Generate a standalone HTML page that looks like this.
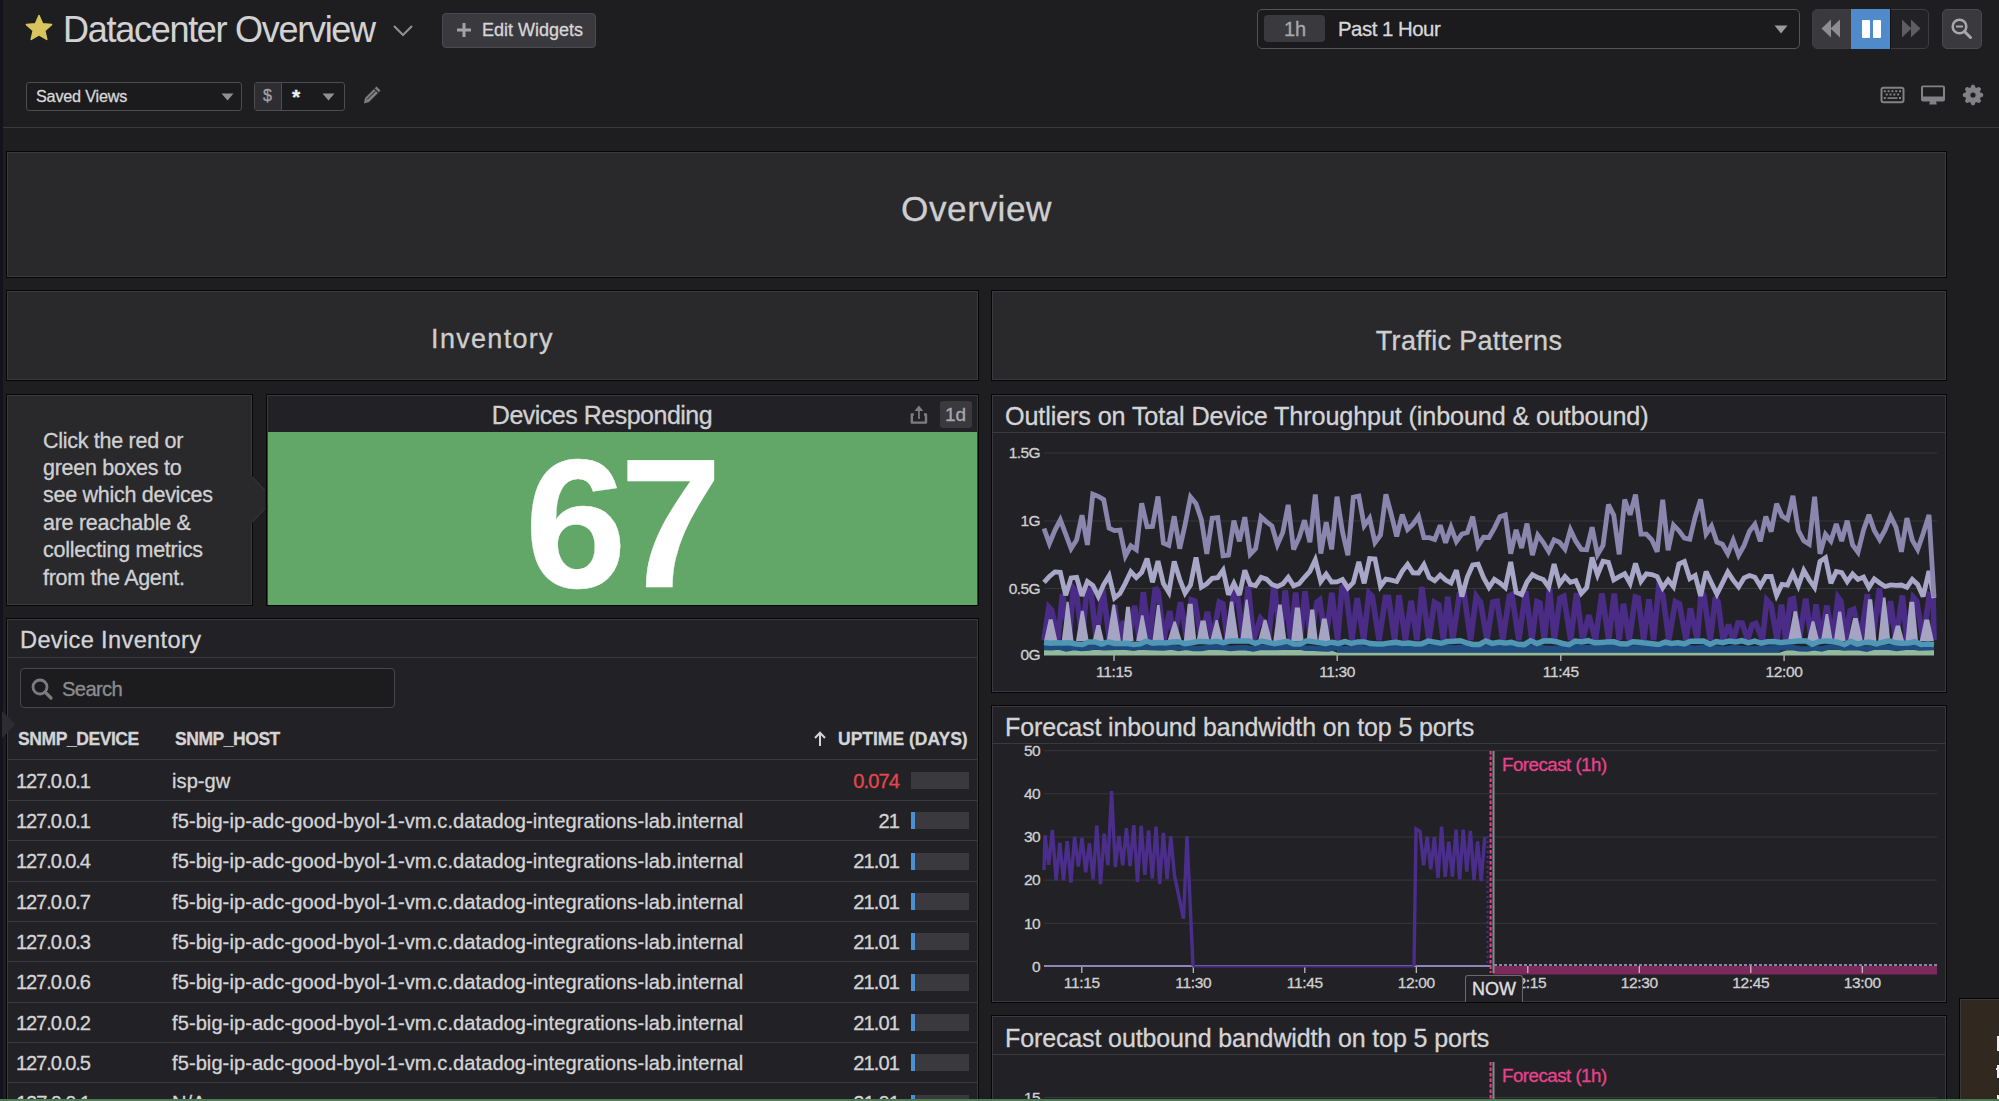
<!DOCTYPE html><html><head><meta charset="utf-8"><style>
*{box-sizing:border-box;margin:0;padding:0}
html,body{width:1999px;height:1101px;overflow:hidden;background:#1e1e20;font-family:"Liberation Sans",sans-serif;color:#d0d0d2}
.a{position:absolute;white-space:nowrap}
.pn{position:absolute;border:1px solid #060608;box-shadow:inset 0 0 0 1px #3a393f;background:#29292c}
.pd{background:#222226}
.t{position:absolute;white-space:nowrap;line-height:1;-webkit-text-stroke:0.3px currentColor}
</style></head><body><div class="a" style="left:0;top:0;width:3px;height:1101px;background:#14131b"></div><div class="a" style="left:3px;top:127px;width:1996px;height:1px;background:#3a393d"></div><svg class="a" style="left:24px;top:14px" width="30" height="28" viewBox="0 0 30 28"><path d="M15 1.5 L18.6 9.8 L27.6 10.6 L20.8 16.6 L22.8 25.4 L15 20.8 L7.2 25.4 L9.2 16.6 L2.4 10.6 L11.4 9.8 Z" fill="#d9c45e" stroke="#d9c45e" stroke-width="1.5" stroke-linejoin="round"/></svg><div class="t" style="left:63px;top:11.5px;font-size:36px;letter-spacing:-1.28px;-webkit-text-stroke:0.1px;color:#d2d2d4">Datacenter Overview</div><svg class="a" style="left:392px;top:24px" width="22" height="14" viewBox="0 0 22 14"><path d="M2 2 L11 11 L20 2" fill="none" stroke="#8e8e92" stroke-width="2.2"/></svg><div class="a" style="left:442px;top:13px;width:154px;height:35px;background:#3a393e;border:1px solid #4b4a50;border-radius:4px"></div><svg class="a" style="left:456px;top:22px" width="16" height="16" viewBox="0 0 16 16"><path d="M8 1 V15 M1 8 H15" stroke="#a3a3a7" stroke-width="3"/></svg><div class="t" style="left:482px;top:21px;font-size:18px;color:#d6d6d8">Edit Widgets</div><div class="a" style="left:26px;top:82px;width:216px;height:29px;background:#1b1b1d;border:1px solid #4d4d51;border-radius:3px"></div><div class="t" style="left:36px;top:88px;font-size:16.2px;letter-spacing:-0.2px;color:#d8d8da">Saved Views</div><svg class="a" style="left:221px;top:93px" width="13" height="8" viewBox="0 0 13 8"><path d="M0.5 0.5 H12.5 L6.5 7.5 Z" fill="#909094"/></svg><div class="a" style="left:254px;top:82px;width:91px;height:29px;background:#1b1b1d;border:1px solid #4d4d51;border-radius:3px"></div><div class="a" style="left:255px;top:83px;width:27px;height:27px;background:#2e2d32;border-right:1px solid #4d4d51"></div><div class="t" style="left:263px;top:88px;font-size:16px;color:#a4a4a8">$</div><div class="t" style="left:292px;top:86px;font-size:21px;color:#f0f0f0;font-weight:bold">*</div><svg class="a" style="left:322px;top:93px" width="13" height="8" viewBox="0 0 13 8"><path d="M0.5 0.5 H12.5 L6.5 7.5 Z" fill="#909094"/></svg><svg class="a" style="left:362px;top:85px" width="20" height="20" viewBox="0 0 20 20"><path d="M14.5 1.5 L18.5 5.5 L7 17 L2 18.5 L3 13 Z" fill="#7e7e82"/><path d="M12.3 3.7 L16.3 7.7" stroke="#1e1e20" stroke-width="1.2"/><path d="M5 14.5 L13.5 6" stroke="#1e1e20" stroke-width="1"/></svg><div class="a" style="left:1257px;top:9px;width:543px;height:40px;background:#1b1b1d;border:1.5px solid #545458;border-radius:5px"></div><div class="a" style="left:1264px;top:15px;width:61px;height:27px;background:#3a393e;border-radius:4px"></div><div class="t" style="left:1284px;top:19px;font-size:20px;color:#a8a8ac">1h</div><div class="t" style="left:1338px;top:19px;font-size:20.4px;letter-spacing:-0.5px;color:#d8d8da">Past 1 Hour</div><svg class="a" style="left:1774px;top:25px" width="14" height="9" viewBox="0 0 14 9"><path d="M0.5 0.5 H13.5 L7 8.5 Z" fill="#9a9a9e"/></svg><div class="a" style="left:1812px;top:9px;width:117px;height:40px;background:#222226;border:1.5px solid #3e3d42;border-radius:5px;overflow:hidden"><div class="a" style="left:0;top:0;width:38px;height:38px;background:#3a393e"></div></div><div class="a" style="left:1850.5px;top:8.5px;width:40.5px;height:40.5px;background:#4f8bcb;border-right:1px solid #111"></div><svg class="a" style="left:1821px;top:19px" width="20" height="19" viewBox="0 0 20 19"><path d="M10 0.5 V18.5 L0.5 9.5 Z M19 0.5 V18.5 L9.5 9.5 Z" fill="#8e8e92"/></svg><div class="a" style="left:1862px;top:20px;width:8px;height:18px;background:#fff;border-radius:1px"></div><div class="a" style="left:1873px;top:20px;width:8px;height:18px;background:#fff;border-radius:1px"></div><svg class="a" style="left:1901px;top:19px" width="20" height="19" viewBox="0 0 20 19"><path d="M1 0.5 V18.5 L10.5 9.5 Z M10 0.5 V18.5 L19.5 9.5 Z" fill="#5e5e62"/></svg><div class="a" style="left:1942px;top:9px;width:40px;height:40px;background:#3a393e;border:1.5px solid #4a494e;border-radius:5px"></div><svg class="a" style="left:1950px;top:17px" width="24" height="24" viewBox="0 0 24 24"><circle cx="9.5" cy="9.5" r="6.8" fill="none" stroke="#a8a8ac" stroke-width="2.6"/><path d="M6 9.5 H13" stroke="#a8a8ac" stroke-width="2"/><path d="M14.5 14.5 L20.5 20.5" stroke="#a8a8ac" stroke-width="3" stroke-linecap="round"/></svg><svg class="a" style="left:1880px;top:86px" width="25" height="18" viewBox="0 0 25 18"><rect x="1.5" y="1.8" width="22" height="14.5" rx="2" fill="none" stroke="#828286" stroke-width="2"/><rect x="3.8" y="4.2" width="2" height="2" fill="#828286"/><rect x="7.6" y="4.2" width="2" height="2" fill="#828286"/><rect x="11.4" y="4.2" width="2" height="2" fill="#828286"/><rect x="15.2" y="4.2" width="2" height="2" fill="#828286"/><rect x="19.0" y="4.2" width="2" height="2" fill="#828286"/><rect x="5.7" y="7.5" width="2" height="2" fill="#828286"/><rect x="9.5" y="7.5" width="2" height="2" fill="#828286"/><rect x="13.3" y="7.5" width="2" height="2" fill="#828286"/><rect x="17.1" y="7.5" width="2" height="2" fill="#828286"/><rect x="3.8" y="11" width="2" height="2" fill="#828286"/><rect x="19" y="11" width="2" height="2" fill="#828286"/><rect x="7.5" y="11.3" width="10" height="1.6" fill="#828286"/></svg><svg class="a" style="left:1920px;top:84px" width="26" height="22" viewBox="0 0 26 22"><path d="M3 1.5 H23 A2 2 0 0 1 25 3.5 V15.5 A2 2 0 0 1 23 17.5 H3 A2 2 0 0 1 1 15.5 V3.5 A2 2 0 0 1 3 1.5 Z M3 3.3 V12.5 H23 V3.3 Z" fill="#828286" fill-rule="evenodd"/><path d="M10 17 H16 L16.8 20.5 H9.2 Z" fill="#828286"/></svg><svg class="a" style="left:1962px;top:84px" width="22" height="22" viewBox="0 0 22 22"><path d="M10.06,1.45 L11.94,1.45 L13.09,4.11 L14.39,4.65 L17.09,3.58 L18.42,4.91 L17.35,7.61 L17.89,8.91 L20.55,10.06 L20.55,11.94 L17.89,13.09 L17.35,14.39 L18.42,17.09 L17.09,18.42 L14.39,17.35 L13.09,17.89 L11.94,20.55 L10.06,20.55 L8.91,17.89 L7.61,17.35 L4.91,18.42 L3.58,17.09 L4.65,14.39 L4.11,13.09 L1.45,11.94 L1.45,10.06 L4.11,8.91 L4.65,7.61 L3.58,4.91 L4.91,3.58 L7.61,4.65 L8.91,4.11 Z M14.2,11 A3.2,3.2 0 1 0 7.8,11 A3.2,3.2 0 1 0 14.2,11 Z" fill="#828286" fill-rule="evenodd" stroke="#828286" stroke-width="1.2" stroke-linejoin="round"/></svg><div class="pn" style="left:6px;top:151px;width:1941px;height:127px;"></div><div class="t" style="left:0;top:191px;width:1953px;text-align:center;font-size:35.2px;letter-spacing:0.55px;color:#cececf">Overview</div><div class="pn" style="left:6px;top:290px;width:973px;height:91px;"></div><div class="t" style="left:6px;top:326px;width:973px;text-align:center;font-size:27px;color:#cececf;letter-spacing:1.3px">Inventory</div><div class="pn" style="left:991px;top:290px;width:956px;height:91px;"></div><div class="t" style="left:991px;top:327.5px;width:956px;text-align:center;font-size:27px;color:#cececf;letter-spacing:0.3px">Traffic Patterns</div><div class="pn" style="left:6px;top:394px;width:247px;height:212px;"></div><svg class="a" style="left:250px;top:474px" width="17" height="52" viewBox="0 0 17 52"><path d="M0 0 L2.5 2.8 L15.2 16 V35 L2.5 48.2 L0 51 Z" fill="#29292c"/><path d="M1.8 2.4 L15 16.2 M15 34.8 L1.8 48.6" fill="none" stroke="#3a393f" stroke-width="1"/></svg><div class="t" style="left:43px;top:430.50px;font-size:21.5px;letter-spacing:-0.28px;color:#d0d0d2">Click the red or</div><div class="t" style="left:43px;top:457.95px;font-size:21.5px;letter-spacing:-0.28px;color:#d0d0d2">green boxes to</div><div class="t" style="left:43px;top:485.40px;font-size:21.5px;letter-spacing:-0.28px;color:#d0d0d2">see which devices</div><div class="t" style="left:43px;top:512.85px;font-size:21.5px;letter-spacing:-0.28px;color:#d0d0d2">are reachable &amp;</div><div class="t" style="left:43px;top:540.30px;font-size:21.5px;letter-spacing:-0.28px;color:#d0d0d2">collecting metrics</div><div class="t" style="left:43px;top:567.75px;font-size:21.5px;letter-spacing:-0.28px;color:#d0d0d2">from the Agent.</div><div class="pn pd" style="left:266px;top:394px;width:713px;height:212px;"></div><div class="a" style="left:268px;top:432px;width:709px;height:173px;background:#62a767"></div><div class="t" style="left:266px;top:403px;width:672px;text-align:center;font-size:25px;letter-spacing:-0.5px;color:#d0d0d2">Devices Responding</div><svg class="a" style="left:909px;top:404px" width="19" height="21" viewBox="0 0 19 21"><path d="M5.5 7 L9.9 1.5 L14.3 7 Z" fill="#7e7e82"/><rect x="9.1" y="6" width="1.7" height="9" fill="#7e7e82"/><path d="M4.8 10.5 H2.8 V18.6 H17 V10.5 H15" fill="none" stroke="#7e7e82" stroke-width="2.4" stroke-linejoin="round"/></svg><div class="a" style="left:940px;top:401px;width:32px;height:27px;background:#3a393e;border-radius:3px"></div><div class="t" style="left:945px;top:405px;font-size:19px;color:#a8a8ac">1d</div><div class="t" style="left:524.5px;top:430.5px;font-size:184px;font-weight:bold;letter-spacing:-7px;color:#ffffff">67</div><div class="pn pd" style="left:6px;top:618px;width:973px;height:500px;"></div><div class="t" style="left:20px;top:629px;font-size:23.6px;letter-spacing:0.35px;color:#d4d4d6">Device Inventory</div><div class="a" style="left:8px;top:657px;width:969px;height:1px;background:#3a393f"></div><div class="a" style="left:20px;top:668px;width:375px;height:40px;background:#1c1c1f;border:1.5px solid #48474c;border-radius:4px"></div><svg class="a" style="left:30px;top:677px" width="24" height="24" viewBox="0 0 24 24"><circle cx="10" cy="10" r="7" fill="none" stroke="#7c7c80" stroke-width="2.8"/><path d="M15 15 L21 21" stroke="#7c7c80" stroke-width="3.2" stroke-linecap="round"/></svg><div class="t" style="left:62px;top:679px;font-size:20.3px;letter-spacing:-0.7px;color:#8c8c90">Search</div><svg class="a" style="left:2px;top:711px" width="15" height="27" viewBox="0 0 15 27"><path d="M0 0 L13.5 13.5 L0 27 Z" fill="#2d2d31"/></svg><div class="t" style="left:18px;top:731px;font-size:17.5px;font-weight:bold;letter-spacing:-0.42px;color:#d4d4d6">SNMP_DEVICE</div><div class="t" style="left:175px;top:731px;font-size:17.5px;font-weight:bold;letter-spacing:-0.45px;color:#d4d4d6">SNMP_HOST</div><svg class="a" style="left:813px;top:731px" width="14" height="16" viewBox="0 0 14 16"><path d="M7 15 V2 M2 7 L7 1.8 L12 7" fill="none" stroke="#d4d4d6" stroke-width="2"/></svg><div class="t" style="left:838px;top:731px;font-size:17.5px;font-weight:bold;color:#d4d4d6">UPTIME (DAYS)</div><div class="a" style="left:8px;top:759px;width:969px;height:1px;background:#3a393f"></div><div class="t" style="left:16px;top:770.5px;font-size:20.1px;letter-spacing:-1.1px;color:#d4d4d6">127.0.0.1</div><div class="t" style="left:172px;top:770.5px;font-size:20.1px;letter-spacing:0.06px;color:#d4d4d6">isp-gw</div><div class="t" style="left:700px;width:199px;text-align:right;top:770.5px;font-size:20.1px;letter-spacing:-0.9px;color:#e5464c">0.074</div><div class="a" style="left:911px;top:771.8px;width:58px;height:17px;background:#3a393e"></div><div class="a" style="left:8px;top:799.8px;width:969px;height:1px;background:#3a393f"></div><div class="t" style="left:16px;top:810.8px;font-size:20.1px;letter-spacing:-1.1px;color:#d4d4d6">127.0.0.1</div><div class="t" style="left:172px;top:810.8px;font-size:20.1px;letter-spacing:0.06px;color:#d4d4d6">f5-big-ip-adc-good-byol-1-vm.c.datadog-integrations-lab.internal</div><div class="t" style="left:700px;width:199px;text-align:right;top:810.8px;font-size:20.1px;letter-spacing:-0.9px;color:#d4d4d6">21</div><div class="a" style="left:911px;top:812.1px;width:58px;height:17px;background:#3a393e"></div><div class="a" style="left:911px;top:812.1px;width:4px;height:17px;background:#4a90d2"></div><div class="a" style="left:8px;top:840.2px;width:969px;height:1px;background:#3a393f"></div><div class="t" style="left:16px;top:851.2px;font-size:20.1px;letter-spacing:-1.1px;color:#d4d4d6">127.0.0.4</div><div class="t" style="left:172px;top:851.2px;font-size:20.1px;letter-spacing:0.06px;color:#d4d4d6">f5-big-ip-adc-good-byol-1-vm.c.datadog-integrations-lab.internal</div><div class="t" style="left:700px;width:199px;text-align:right;top:851.2px;font-size:20.1px;letter-spacing:-0.9px;color:#d4d4d6">21.01</div><div class="a" style="left:911px;top:852.5px;width:58px;height:17px;background:#3a393e"></div><div class="a" style="left:911px;top:852.5px;width:4px;height:17px;background:#4a90d2"></div><div class="a" style="left:8px;top:880.5px;width:969px;height:1px;background:#3a393f"></div><div class="t" style="left:16px;top:891.5px;font-size:20.1px;letter-spacing:-1.1px;color:#d4d4d6">127.0.0.7</div><div class="t" style="left:172px;top:891.5px;font-size:20.1px;letter-spacing:0.06px;color:#d4d4d6">f5-big-ip-adc-good-byol-1-vm.c.datadog-integrations-lab.internal</div><div class="t" style="left:700px;width:199px;text-align:right;top:891.5px;font-size:20.1px;letter-spacing:-0.9px;color:#d4d4d6">21.01</div><div class="a" style="left:911px;top:892.8px;width:58px;height:17px;background:#3a393e"></div><div class="a" style="left:911px;top:892.8px;width:4px;height:17px;background:#4a90d2"></div><div class="a" style="left:8px;top:920.9px;width:969px;height:1px;background:#3a393f"></div><div class="t" style="left:16px;top:931.9px;font-size:20.1px;letter-spacing:-1.1px;color:#d4d4d6">127.0.0.3</div><div class="t" style="left:172px;top:931.9px;font-size:20.1px;letter-spacing:0.06px;color:#d4d4d6">f5-big-ip-adc-good-byol-1-vm.c.datadog-integrations-lab.internal</div><div class="t" style="left:700px;width:199px;text-align:right;top:931.9px;font-size:20.1px;letter-spacing:-0.9px;color:#d4d4d6">21.01</div><div class="a" style="left:911px;top:933.2px;width:58px;height:17px;background:#3a393e"></div><div class="a" style="left:911px;top:933.2px;width:4px;height:17px;background:#4a90d2"></div><div class="a" style="left:8px;top:961.2px;width:969px;height:1px;background:#3a393f"></div><div class="t" style="left:16px;top:972.2px;font-size:20.1px;letter-spacing:-1.1px;color:#d4d4d6">127.0.0.6</div><div class="t" style="left:172px;top:972.2px;font-size:20.1px;letter-spacing:0.06px;color:#d4d4d6">f5-big-ip-adc-good-byol-1-vm.c.datadog-integrations-lab.internal</div><div class="t" style="left:700px;width:199px;text-align:right;top:972.2px;font-size:20.1px;letter-spacing:-0.9px;color:#d4d4d6">21.01</div><div class="a" style="left:911px;top:973.5px;width:58px;height:17px;background:#3a393e"></div><div class="a" style="left:911px;top:973.5px;width:4px;height:17px;background:#4a90d2"></div><div class="a" style="left:8px;top:1001.5px;width:969px;height:1px;background:#3a393f"></div><div class="t" style="left:16px;top:1012.5px;font-size:20.1px;letter-spacing:-1.1px;color:#d4d4d6">127.0.0.2</div><div class="t" style="left:172px;top:1012.5px;font-size:20.1px;letter-spacing:0.06px;color:#d4d4d6">f5-big-ip-adc-good-byol-1-vm.c.datadog-integrations-lab.internal</div><div class="t" style="left:700px;width:199px;text-align:right;top:1012.5px;font-size:20.1px;letter-spacing:-0.9px;color:#d4d4d6">21.01</div><div class="a" style="left:911px;top:1013.8px;width:58px;height:17px;background:#3a393e"></div><div class="a" style="left:911px;top:1013.8px;width:4px;height:17px;background:#4a90d2"></div><div class="a" style="left:8px;top:1041.9px;width:969px;height:1px;background:#3a393f"></div><div class="t" style="left:16px;top:1052.9px;font-size:20.1px;letter-spacing:-1.1px;color:#d4d4d6">127.0.0.5</div><div class="t" style="left:172px;top:1052.9px;font-size:20.1px;letter-spacing:0.06px;color:#d4d4d6">f5-big-ip-adc-good-byol-1-vm.c.datadog-integrations-lab.internal</div><div class="t" style="left:700px;width:199px;text-align:right;top:1052.9px;font-size:20.1px;letter-spacing:-0.9px;color:#d4d4d6">21.01</div><div class="a" style="left:911px;top:1054.2px;width:58px;height:17px;background:#3a393e"></div><div class="a" style="left:911px;top:1054.2px;width:4px;height:17px;background:#4a90d2"></div><div class="a" style="left:8px;top:1082.2px;width:969px;height:1px;background:#3a393f"></div><div class="t" style="left:16px;top:1093.2px;font-size:20.1px;letter-spacing:-1.1px;color:#d4d4d6">127.0.0.1</div><div class="t" style="left:172px;top:1093.2px;font-size:20.1px;letter-spacing:0.06px;color:#d4d4d6">N/A</div><div class="t" style="left:700px;width:199px;text-align:right;top:1093.2px;font-size:20.1px;letter-spacing:-0.9px;color:#d4d4d6">21.01</div><div class="a" style="left:911px;top:1094.5px;width:58px;height:17px;background:#3a393e"></div><div class="a" style="left:911px;top:1094.5px;width:4px;height:17px;background:#4a90d2"></div><div class="a" style="left:8px;top:1122.6px;width:969px;height:1px;background:#3a393f"></div><div class="pn pd" style="left:991px;top:394px;width:956px;height:299px;"></div><div class="t" style="left:1005px;top:403.5px;font-size:25.2px;letter-spacing:-0.12px;color:#d4d4d6">Outliers on Total Device Throughput (inbound &amp; outbound)</div><div class="a" style="left:993px;top:432px;width:952px;height:1px;background:#3a393f"></div><div class="t" style="left:980px;width:60px;text-align:right;top:445.2px;font-size:15.5px;letter-spacing:-0.6px;color:#d0d0d2">1.5G</div><div class="t" style="left:980px;width:60px;text-align:right;top:513.2px;font-size:15.5px;letter-spacing:-0.6px;color:#d0d0d2">1G</div><div class="t" style="left:980px;width:60px;text-align:right;top:580.8px;font-size:15.5px;letter-spacing:-0.6px;color:#d0d0d2">0.5G</div><div class="t" style="left:980px;width:60px;text-align:right;top:647.2px;font-size:15.5px;letter-spacing:-0.6px;color:#d0d0d2">0G</div><div class="t" style="left:1074.0px;width:80px;text-align:center;top:664.2px;font-size:15.5px;letter-spacing:-0.35px;color:#d0d0d2">11:15</div><div class="t" style="left:1297.2px;width:80px;text-align:center;top:664.2px;font-size:15.5px;letter-spacing:-0.35px;color:#d0d0d2">11:30</div><div class="t" style="left:1520.8px;width:80px;text-align:center;top:664.2px;font-size:15.5px;letter-spacing:-0.35px;color:#d0d0d2">11:45</div><div class="t" style="left:1744.1px;width:80px;text-align:center;top:664.2px;font-size:15.5px;letter-spacing:-0.35px;color:#d0d0d2">12:00</div><svg class="a" style="left:0;top:0" width="1999" height="1101" viewBox="0 0 1999 1101"><line x1="1044" x2="1937" y1="453" y2="453" stroke="#37363b" stroke-width="1"/><line x1="1044" x2="1937" y1="521" y2="521" stroke="#37363b" stroke-width="1"/><line x1="1044" x2="1937" y1="588.5" y2="588.5" stroke="#37363b" stroke-width="1"/><line x1="1114" x2="1114" y1="655" y2="661" stroke="#c8c8ca" stroke-width="1.2"/><line x1="1337.2" x2="1337.2" y1="655" y2="661" stroke="#c8c8ca" stroke-width="1.2"/><line x1="1560.8" x2="1560.8" y1="655" y2="661" stroke="#c8c8ca" stroke-width="1.2"/><line x1="1784.1" x2="1784.1" y1="655" y2="661" stroke="#c8c8ca" stroke-width="1.2"/><polyline points="1044.0,640.0 1048.9,607.1 1051.6,610.0 1057.9,640.0 1062.5,594.1 1069.2,640.0 1073.3,588.1 1076.3,591.5 1082.1,640.0 1086.7,590.2 1090.8,590.0 1096.4,640.0 1102.8,589.7 1109.6,640.0 1114.6,605.1 1119.3,640.0 1123.4,621.2 1129.0,640.0 1134.6,605.8 1139.3,640.0 1143.3,592.2 1149.4,640.0 1155.3,587.5 1158.3,592.3 1163.8,640.0 1169.7,611.1 1174.2,640.0 1180.5,602.1 1187.0,640.0 1191.2,599.8 1194.7,601.0 1201.5,640.0 1207.3,611.8 1212.6,640.0 1219.3,602.2 1222.9,603.9 1227.4,640.0 1233.9,590.8 1237.0,592.0 1243.1,640.0 1248.2,586.3 1253.6,640.0 1260.5,618.4 1263.7,621.8 1268.4,640.0 1274.1,584.2 1280.5,640.0 1285.2,590.4 1290.8,640.0 1295.7,592.6 1300.4,640.0 1305.0,591.2 1310.7,640.0 1316.9,602.2 1319.7,600.0 1325.7,640.0 1331.8,592.9 1337.6,640.0 1341.9,587.5 1345.2,585.1 1352.0,640.0 1357.2,598.2 1363.7,640.0 1368.9,593.1 1372.2,596.4 1379.1,640.0 1385.5,597.4 1388.6,597.5 1394.6,640.0 1398.9,595.2 1405.4,640.0 1411.2,600.9 1416.9,640.0 1421.9,587.1 1428.9,640.0 1434.4,602.4 1438.8,605.0 1443.4,640.0 1447.7,596.7 1452.7,640.0 1459.4,594.2 1463.9,592.4 1470.6,640.0 1476.2,596.3 1480.6,602.3 1487.0,640.0 1492.8,602.1 1497.1,601.3 1502.8,640.0 1509.3,596.1 1511.9,594.7 1518.8,640.0 1525.7,590.8 1531.9,640.0 1537.0,601.7 1539.9,602.9 1544.3,640.0 1549.5,587.8 1554.3,640.0 1560.0,598.1 1563.8,596.4 1570.7,640.0 1576.5,593.1 1582.6,640.0 1588.9,615.2 1595.4,640.0 1601.9,593.5 1608.7,640.0 1614.2,593.5 1619.2,640.0 1623.4,603.8 1629.2,640.0 1635.4,597.1 1638.2,598.1 1643.7,640.0 1648.9,599.3 1653.6,640.0 1658.5,589.2 1662.8,594.9 1668.8,640.0 1675.4,601.7 1679.4,603.8 1686.1,640.0 1690.4,608.4 1697.3,640.0 1701.3,590.6 1703.9,595.6 1710.3,640.0 1715.5,596.9 1718.1,602.0 1723.0,640.0 1728.5,624.6 1733.1,640.0 1738.0,623.0 1742.2,623.2 1747.6,640.0 1752.1,624.9 1755.9,623.6 1762.5,640.0 1766.7,600.0 1771.0,604.8 1777.1,640.0 1781.5,604.6 1785.8,640.0 1790.4,599.6 1793.3,598.8 1799.3,640.0 1805.7,598.6 1811.4,640.0 1816.1,604.4 1820.9,640.0 1826.9,605.6 1832.5,640.0 1838.0,597.2 1841.0,601.4 1845.3,640.0 1850.2,610.7 1853.8,609.3 1860.5,640.0 1867.4,594.2 1872.6,640.0 1879.4,588.0 1885.3,640.0 1890.4,601.2 1895.9,640.0 1902.4,595.5 1906.9,640.0 1913.3,597.4 1916.7,601.3 1923.0,640.0 1929.4,594.8 1933.1,596.3 1934.0,640.0" fill="none" stroke="#4a2c87" stroke-width="5.6" stroke-linejoin="miter" stroke-miterlimit="3" /><polygon points="1044.0,641 1048.8,619.2 1052.6,619.2 1057.4,641" fill="#a6a4c3"/><polygon points="1061.8,641 1066.6,601.7 1068.6,601.7 1073.5,641" fill="#a6a4c3"/><polygon points="1076.0,641 1080.9,610.7 1083.7,610.7 1088.7,641" fill="#a6a4c3"/><polygon points="1092.7,641 1096.5,625.1 1100.2,625.1 1104.0,641" fill="#a6a4c3"/><polygon points="1106.7,641 1112.6,604.4 1115.0,604.4 1120.9,641" fill="#a6a4c3"/><polygon points="1122.4,641 1126.1,606.7 1129.9,606.7 1133.6,641" fill="#a6a4c3"/><polygon points="1136.2,641 1141.1,615.2 1143.4,615.2 1148.3,641" fill="#a6a4c3"/><polygon points="1152.4,641 1157.0,604.9 1159.5,604.9 1164.1,641" fill="#a6a4c3"/><polygon points="1167.5,641 1173.6,621.4 1175.8,621.4 1181.8,641" fill="#a6a4c3"/><polygon points="1183.9,641 1187.7,603.7 1192.6,603.7 1196.3,641" fill="#a6a4c3"/><polygon points="1196.6,641 1200.6,620.6 1205.5,620.6 1209.5,641" fill="#a6a4c3"/><polygon points="1210.2,641 1215.6,620.1 1217.7,620.1 1223.1,641" fill="#a6a4c3"/><polygon points="1224.3,641 1230.0,601.4 1233.1,601.4 1238.8,641" fill="#a6a4c3"/><polygon points="1240.3,641 1245.6,599.4 1247.7,599.4 1253.0,641" fill="#a6a4c3"/><polygon points="1258.0,641 1263.7,619.8 1266.4,619.8 1272.0,641" fill="#a6a4c3"/><polygon points="1273.3,641 1278.2,604.5 1281.6,604.5 1286.5,641" fill="#a6a4c3"/><polygon points="1291.2,641 1294.9,607.4 1299.9,607.4 1303.6,641" fill="#a6a4c3"/><polygon points="1306.7,641 1310.3,609.5 1314.2,609.5 1317.8,641" fill="#a6a4c3"/><polygon points="1318.1,641 1322.0,618.5 1326.6,618.5 1330.5,641" fill="#a6a4c3"/><polygon points="1788.0,641 1793.7,611.3 1796.9,611.3 1802.5,641" fill="#a6a4c3"/><polygon points="1806.8,641 1811.7,621.2 1814.3,621.2 1819.3,641" fill="#a6a4c3"/><polygon points="1821.0,641 1825.6,614.0 1828.1,614.0 1832.8,641" fill="#a6a4c3"/><polygon points="1833.8,641 1838.2,611.5 1841.2,611.5 1845.6,641" fill="#a6a4c3"/><polygon points="1847.9,641 1853.1,618.1 1857.6,618.1 1862.8,641" fill="#a6a4c3"/><polygon points="1863.9,641 1868.1,599.3 1872.2,599.3 1876.4,641" fill="#a6a4c3"/><polygon points="1878.2,641 1883.0,597.6 1885.5,597.6 1890.3,641" fill="#a6a4c3"/><polygon points="1891.6,641 1895.8,625.6 1900.0,625.6 1904.2,641" fill="#a6a4c3"/><polygon points="1905.5,641 1909.4,601.8 1914.2,601.8 1918.0,641" fill="#a6a4c3"/><polygon points="1919.8,641 1924.4,619.4 1929.2,619.4 1933.8,641" fill="#a6a4c3"/><polygon points="1044,650 1330,650 1337,652.5 1780,652.5 1787,650 1934,650 1934,655.5 1044,655.5" fill="#93b89b"/><polyline points="1044.0,647.6 1051.5,647.7 1059.0,647.0 1066.4,648.9 1073.9,647.6 1081.4,648.6 1088.9,648.0 1096.4,646.9 1103.8,647.7 1111.3,647.4 1118.8,646.9 1126.3,647.2 1133.7,648.2 1141.2,646.9 1148.7,647.5 1156.2,647.8 1163.7,648.1 1171.1,647.1 1178.6,648.5 1186.1,647.4 1193.6,648.5 1201.1,648.4 1208.5,647.2 1216.0,647.3 1223.5,647.5 1231.0,648.5 1238.5,647.8 1245.9,647.7 1253.4,648.9 1260.9,647.3 1268.4,647.5 1275.8,647.6 1283.3,647.3 1290.8,646.9 1298.3,646.9 1305.8,648.3 1313.2,648.2 1320.7,648.7 1328.2,649.1 1335.7,647.5 1343.2,648.4 1350.6,649.0 1358.1,647.3 1365.6,648.5 1373.1,648.4 1380.6,649.1 1388.0,648.9 1395.5,647.4 1403.0,648.3 1410.5,647.0 1417.9,647.8 1425.4,647.7 1432.9,646.9 1440.4,647.7 1447.9,647.6 1455.3,648.0 1462.8,647.5 1470.3,647.2 1477.8,647.8 1485.3,647.9 1492.7,647.2 1500.2,648.4 1507.7,647.4 1515.2,647.0 1522.7,647.6 1530.1,647.8 1537.6,647.2 1545.1,648.2 1552.6,648.5 1560.1,648.1 1567.5,648.5 1575.0,646.9 1582.5,647.7 1590.0,647.7 1597.4,647.0 1604.9,647.8 1612.4,646.9 1619.9,648.0 1627.4,648.2 1634.8,647.9 1642.3,647.6 1649.8,647.4 1657.3,646.9 1664.8,647.6 1672.2,648.9 1679.7,648.2 1687.2,647.4 1694.7,648.4 1702.2,647.2 1709.6,647.9 1717.1,648.3 1724.6,649.1 1732.1,647.7 1739.5,648.2 1747.0,649.1 1754.5,648.7 1762.0,648.3 1769.5,648.3 1776.9,647.8 1784.4,647.8 1791.9,647.5 1799.4,648.8 1806.9,648.9 1814.3,647.7 1821.8,649.0 1829.3,646.9 1836.8,647.1 1844.3,648.0 1851.7,647.5 1859.2,647.7 1866.7,649.1 1874.2,647.2 1881.6,647.3 1889.1,647.3 1896.6,648.4 1904.1,647.4 1911.6,646.8 1919.0,648.1 1926.5,647.7 1934.0,647.4" fill="none" stroke="#1f4c7e" stroke-width="5.5" stroke-linejoin="miter" stroke-miterlimit="3" /><polygon points="1337,647 1780,647 1780,652.5 1337,652.5" fill="#1f4c7e"/><polyline points="1044.0,642.6 1050.4,643.2 1056.8,642.8 1063.2,643.1 1069.6,642.8 1076.0,643.9 1082.4,644.5 1088.8,641.9 1095.2,642.0 1101.6,644.1 1108.0,641.9 1114.4,643.5 1120.8,643.4 1127.2,643.3 1133.6,644.5 1140.0,643.9 1146.4,641.2 1152.8,643.1 1159.3,642.6 1165.7,642.9 1172.1,642.1 1178.5,641.7 1184.9,643.6 1191.3,642.7 1197.7,641.5 1204.1,641.6 1210.5,641.9 1216.9,641.3 1223.3,642.7 1229.7,641.1 1236.1,640.9 1242.5,640.9 1248.9,641.0 1255.3,643.4 1261.7,641.1 1268.1,642.4 1274.5,643.7 1280.9,642.5 1287.3,641.3 1293.7,644.1 1300.1,644.1 1306.5,640.8 1312.9,641.6 1319.3,642.6 1325.7,643.8 1332.1,642.2 1338.5,643.5 1344.9,641.6 1351.3,643.5 1357.7,641.9 1364.1,641.9 1370.5,643.6 1376.9,644.0 1383.4,643.9 1389.8,642.9 1396.2,642.3 1402.6,643.4 1409.0,643.1 1415.4,643.9 1421.8,643.8 1428.2,641.1 1434.6,642.1 1441.0,643.3 1447.4,641.5 1453.8,641.3 1460.2,640.7 1466.6,642.9 1473.0,644.4 1479.4,644.5 1485.8,641.1 1492.2,643.4 1498.6,642.3 1505.0,643.1 1511.4,642.2 1517.8,644.3 1524.2,644.6 1530.6,640.8 1537.0,643.5 1543.4,641.1 1549.8,640.8 1556.2,641.7 1562.6,643.5 1569.0,644.6 1575.4,641.1 1581.8,641.9 1588.2,640.7 1594.6,642.8 1601.1,642.5 1607.5,642.1 1613.9,641.8 1620.3,643.8 1626.7,644.0 1633.1,641.7 1639.5,642.2 1645.9,643.1 1652.3,643.7 1658.7,644.5 1665.1,642.2 1671.5,643.4 1677.9,642.8 1684.3,643.8 1690.7,641.2 1697.1,641.3 1703.5,641.0 1709.9,644.3 1716.3,641.6 1722.7,642.6 1729.1,641.1 1735.5,641.9 1741.9,640.7 1748.3,642.9 1754.7,641.2 1761.1,643.1 1767.5,641.7 1773.9,641.5 1780.3,642.5 1786.7,642.1 1793.1,641.6 1799.5,640.8 1805.9,640.9 1812.3,644.2 1818.7,641.8 1825.2,640.9 1831.6,641.3 1838.0,642.5 1844.4,644.6 1850.8,641.4 1857.2,644.1 1863.6,642.5 1870.0,642.3 1876.4,643.8 1882.8,642.2 1889.2,640.8 1895.6,642.8 1902.0,643.2 1908.4,643.1 1914.8,641.7 1921.2,644.4 1927.6,644.1 1934.0,644.6" fill="none" stroke="#4f97b5" stroke-width="5.5" stroke-linejoin="miter" stroke-miterlimit="3" /><polyline points="1044.0,582.4 1049.4,576.4 1054.9,571.9 1060.3,572.2 1065.7,595.2 1071.1,577.9 1076.6,577.4 1082.0,595.8 1087.4,581.5 1092.8,585.3 1098.3,596.4 1103.7,584.6 1109.1,575.7 1114.5,598.0 1120.0,593.4 1125.4,583.1 1130.8,571.7 1136.3,577.6 1141.7,572.3 1147.1,558.6 1152.5,582.3 1158.0,561.0 1163.4,583.6 1168.8,592.4 1174.2,561.4 1179.7,579.3 1185.1,593.2 1190.5,585.1 1196.0,557.5 1201.4,587.1 1206.8,583.8 1212.2,578.4 1217.7,577.7 1223.1,570.2 1228.5,594.7 1233.9,583.3 1239.4,595.1 1244.8,570.3 1250.2,584.4 1255.6,585.5 1261.1,577.3 1266.5,579.1 1271.9,584.5 1277.4,586.4 1282.8,584.0 1288.2,577.3 1293.6,585.8 1299.1,583.8 1304.5,577.3 1309.9,571.3 1315.3,559.8 1320.8,581.5 1326.2,574.2 1331.6,582.0 1337.0,581.9 1342.5,579.6 1347.9,588.0 1353.3,582.6 1358.8,561.9 1364.2,583.3 1369.6,558.6 1375.0,559.0 1380.5,586.3 1385.9,579.1 1391.3,580.2 1396.7,581.5 1402.2,571.4 1407.6,564.4 1413.0,572.9 1418.5,573.0 1423.9,564.6 1429.3,577.6 1434.7,580.8 1440.2,575.1 1445.6,580.1 1451.0,582.9 1456.4,570.3 1461.9,596.5 1467.3,577.0 1472.7,564.9 1478.1,564.2 1483.6,577.7 1489.0,587.5 1494.4,579.4 1499.9,583.0 1505.3,587.6 1510.7,562.0 1516.1,592.3 1521.6,594.7 1527.0,582.0 1532.4,574.7 1537.8,577.6 1543.3,579.6 1548.7,587.1 1554.1,564.1 1559.5,584.1 1565.0,576.5 1570.4,582.3 1575.8,580.7 1581.3,593.5 1586.7,587.6 1592.1,557.5 1597.5,574.9 1603.0,561.3 1608.4,562.4 1613.8,579.9 1619.2,576.7 1624.7,573.8 1630.1,583.4 1635.5,563.5 1641.0,581.2 1646.4,573.8 1651.8,574.6 1657.2,576.6 1662.7,587.8 1668.1,579.9 1673.5,586.6 1678.9,564.0 1684.4,561.5 1689.8,578.7 1695.2,575.4 1700.6,596.0 1706.1,571.5 1711.5,583.0 1716.9,594.1 1722.4,583.1 1727.8,572.1 1733.2,580.2 1738.6,586.9 1744.1,577.9 1749.5,575.5 1754.9,577.2 1760.3,586.1 1765.8,576.5 1771.2,576.5 1776.6,595.4 1782.0,584.3 1787.5,585.1 1792.9,573.2 1798.3,585.9 1803.8,570.4 1809.2,579.8 1814.6,587.4 1820.0,561.4 1825.5,557.7 1830.9,583.3 1836.3,571.5 1841.7,572.6 1847.2,581.7 1852.6,574.0 1858.0,579.4 1863.5,577.1 1868.9,587.4 1874.3,578.9 1879.7,583.0 1885.2,586.5 1890.6,584.9 1896.0,585.4 1901.4,585.0 1906.9,587.2 1912.3,579.4 1917.7,584.4 1923.1,596.4 1929.0,571.0 1934.0,598.0" fill="none" stroke="#a9a7c7" stroke-width="4.8" stroke-linejoin="miter" stroke-miterlimit="3" /><polyline points="1044.0,528.5 1049.4,543.6 1054.9,530.3 1060.3,519.9 1065.7,534.2 1071.1,548.7 1076.6,539.9 1082.0,515.3 1087.4,544.9 1092.8,494.2 1098.3,496.3 1103.7,499.6 1109.1,528.1 1114.5,530.6 1120.0,530.0 1125.4,556.0 1130.8,545.9 1136.3,549.8 1141.7,503.2 1147.1,526.8 1152.5,526.4 1158.0,496.5 1163.4,543.1 1168.8,545.4 1174.2,516.3 1179.7,548.7 1185.1,524.6 1190.5,497.0 1196.0,503.6 1201.4,519.7 1206.8,553.9 1212.2,518.2 1217.7,517.7 1223.1,555.8 1228.5,555.1 1233.9,520.7 1239.4,541.3 1244.8,517.2 1250.2,554.2 1255.6,548.6 1261.1,516.9 1266.5,521.8 1271.9,525.9 1277.4,544.7 1282.8,532.4 1288.2,504.9 1293.6,549.5 1299.1,537.7 1304.5,520.3 1309.9,542.2 1315.3,494.5 1320.8,553.6 1326.2,522.2 1331.6,549.4 1337.0,496.7 1342.5,531.9 1347.9,555.3 1353.3,497.2 1358.8,496.1 1364.2,525.8 1369.6,518.2 1375.0,542.5 1380.5,535.0 1385.9,494.4 1391.3,514.6 1396.7,536.4 1402.2,514.7 1407.6,529.4 1413.0,524.2 1418.5,516.4 1423.9,537.6 1429.3,537.6 1434.7,539.4 1440.2,525.3 1445.6,542.8 1451.0,527.3 1456.4,541.6 1461.9,534.0 1467.3,532.6 1472.7,516.6 1478.1,545.8 1483.6,537.3 1489.0,537.5 1494.4,528.1 1499.9,516.7 1505.3,515.0 1510.7,553.6 1516.1,529.9 1521.6,548.1 1527.0,523.6 1532.4,555.2 1537.8,535.1 1543.3,542.5 1548.7,551.4 1554.1,539.8 1559.5,542.2 1565.0,549.1 1570.4,529.9 1575.8,541.2 1581.3,549.4 1586.7,549.7 1592.1,527.2 1597.5,554.7 1603.0,545.4 1608.4,504.5 1613.8,515.3 1619.2,554.3 1624.7,499.5 1630.1,514.8 1635.5,494.6 1641.0,534.1 1646.4,534.2 1651.8,539.8 1657.2,551.8 1662.7,499.7 1668.1,550.2 1673.5,525.1 1678.9,530.7 1684.4,538.2 1689.8,539.3 1695.2,516.8 1700.6,499.4 1706.1,534.0 1711.5,526.1 1716.9,542.1 1722.4,544.2 1727.8,553.8 1733.2,540.2 1738.6,555.2 1744.1,545.4 1749.5,531.2 1754.9,524.3 1760.3,541.4 1765.8,516.6 1771.2,531.6 1776.6,503.7 1782.0,516.0 1787.5,519.5 1792.9,495.8 1798.3,530.5 1803.8,540.9 1809.2,544.3 1814.6,496.7 1820.0,553.8 1825.5,534.4 1830.9,541.0 1836.3,524.0 1841.7,541.0 1847.2,520.7 1852.6,545.0 1858.0,552.3 1863.5,530.1 1868.9,514.9 1874.3,530.5 1879.7,539.6 1885.2,529.7 1890.6,516.1 1896.0,527.2 1901.4,551.8 1906.9,518.1 1912.3,540.1 1917.7,549.5 1923.1,533.8 1929.0,515.0 1934.0,597.0" fill="none" stroke="#8a86ae" stroke-width="4.8" stroke-linejoin="miter" stroke-miterlimit="3" /></svg><div class="pn pd" style="left:991px;top:705px;width:956px;height:298px;"></div><div class="t" style="left:1005px;top:715px;font-size:25px;letter-spacing:-0.12px;color:#d4d4d6">Forecast inbound bandwidth on top 5 ports</div><div class="a" style="left:993px;top:743px;width:952px;height:1px;background:#3a393f"></div><div class="t" style="left:980px;width:60px;text-align:right;top:743.0px;font-size:15.5px;letter-spacing:-0.6px;color:#d0d0d2">50</div><div class="t" style="left:980px;width:60px;text-align:right;top:786.1px;font-size:15.5px;letter-spacing:-0.6px;color:#d0d0d2">40</div><div class="t" style="left:980px;width:60px;text-align:right;top:829.2px;font-size:15.5px;letter-spacing:-0.6px;color:#d0d0d2">30</div><div class="t" style="left:980px;width:60px;text-align:right;top:872.4px;font-size:15.5px;letter-spacing:-0.6px;color:#d0d0d2">20</div><div class="t" style="left:980px;width:60px;text-align:right;top:915.5px;font-size:15.5px;letter-spacing:-0.6px;color:#d0d0d2">10</div><div class="t" style="left:980px;width:60px;text-align:right;top:958.6px;font-size:15.5px;letter-spacing:-0.6px;color:#d0d0d2">0</div><div class="t" style="left:1041.8px;width:80px;text-align:center;top:974.5px;font-size:15.5px;letter-spacing:-0.35px;color:#d0d0d2">11:15</div><div class="t" style="left:1153.3px;width:80px;text-align:center;top:974.5px;font-size:15.5px;letter-spacing:-0.35px;color:#d0d0d2">11:30</div><div class="t" style="left:1264.8px;width:80px;text-align:center;top:974.5px;font-size:15.5px;letter-spacing:-0.35px;color:#d0d0d2">11:45</div><div class="t" style="left:1376.3px;width:80px;text-align:center;top:974.5px;font-size:15.5px;letter-spacing:-0.35px;color:#d0d0d2">12:00</div><div class="t" style="left:1487.8px;width:80px;text-align:center;top:974.5px;font-size:15.5px;letter-spacing:-0.35px;color:#d0d0d2">12:15</div><div class="t" style="left:1599.3px;width:80px;text-align:center;top:974.5px;font-size:15.5px;letter-spacing:-0.35px;color:#d0d0d2">12:30</div><div class="t" style="left:1710.8px;width:80px;text-align:center;top:974.5px;font-size:15.5px;letter-spacing:-0.35px;color:#d0d0d2">12:45</div><div class="t" style="left:1822.3px;width:80px;text-align:center;top:974.5px;font-size:15.5px;letter-spacing:-0.35px;color:#d0d0d2">13:00</div><svg class="a" style="left:0;top:0" width="1999" height="1101" viewBox="0 0 1999 1101"><line x1="1044" x2="1937" y1="750.7" y2="750.7" stroke="#37363b" stroke-width="1"/><line x1="1044" x2="1937" y1="793.8" y2="793.8" stroke="#37363b" stroke-width="1"/><line x1="1044" x2="1937" y1="837.0" y2="837.0" stroke="#37363b" stroke-width="1"/><line x1="1044" x2="1937" y1="880.1" y2="880.1" stroke="#37363b" stroke-width="1"/><line x1="1044" x2="1937" y1="923.3" y2="923.3" stroke="#37363b" stroke-width="1"/><rect x="1493" y="966" width="444" height="8.5" fill="#7b2a5b"/><line x1="1081.8" x2="1081.8" y1="966" y2="973" stroke="#c8c8ca" stroke-width="1.2"/><line x1="1193.3" x2="1193.3" y1="966" y2="973" stroke="#c8c8ca" stroke-width="1.2"/><line x1="1304.8" x2="1304.8" y1="966" y2="973" stroke="#c8c8ca" stroke-width="1.2"/><line x1="1416.3" x2="1416.3" y1="966" y2="973" stroke="#c8c8ca" stroke-width="1.2"/><line x1="1527.8" x2="1527.8" y1="966" y2="973" stroke="#c8c8ca" stroke-width="1.2"/><line x1="1639.3" x2="1639.3" y1="966" y2="973" stroke="#c8c8ca" stroke-width="1.2"/><line x1="1750.8" x2="1750.8" y1="966" y2="973" stroke="#c8c8ca" stroke-width="1.2"/><line x1="1862.3" x2="1862.3" y1="966" y2="973" stroke="#c8c8ca" stroke-width="1.2"/><line x1="1044" x2="1491" y1="966" y2="966" stroke="#8d86b8" stroke-width="2.2"/><line x1="1193" x2="1414" y1="966.5" y2="966.5" stroke="#4a2c87" stroke-width="2"/><line x1="1494" x2="1937" y1="965" y2="965" stroke="#a9a7c7" stroke-width="1.5" stroke-dasharray="3 2"/><polyline points="1044.0,870.0 1045.0,835.2 1048.7,864.7 1052.4,830.0 1056.1,880.3 1059.8,843.0 1063.5,880.4 1067.2,841.2 1070.9,882.7 1074.6,836.8 1078.3,866.6 1082.0,837.7 1085.7,872.2 1089.4,843.3 1093.1,879.4 1096.8,825.7 1100.5,884.2 1104.2,833.7 1107.9,865.2 1111.6,791.0 1115.3,867.0 1119.0,836.0 1122.7,865.4 1126.4,828.1 1130.1,866.2 1133.8,825.2 1137.5,882.0 1141.2,825.8 1144.9,874.9 1148.6,830.4 1152.3,878.5 1156.0,826.6 1159.7,883.9 1163.4,832.8 1167.1,879.0 1170.8,836.2 1174.5,875.7 1183.5,918.7 1187.0,836.0 1193.0,966.0" fill="none" stroke="#4b2d8c" stroke-width="3.4" stroke-linejoin="miter" stroke-miterlimit="3" /><polyline points="1414.0,966.0 1416.0,829.0 1420.0,831.3 1423.6,865.2 1427.2,836.7 1430.8,869.3 1434.4,836.9 1438.0,877.8 1441.6,826.7 1445.2,876.8 1448.8,841.7 1452.4,876.5 1456.0,829.7 1459.6,879.4 1463.2,829.7 1466.8,871.5 1470.4,830.8 1474.0,880.2 1477.6,841.5 1481.2,881.0 1484.8,837.0" fill="none" stroke="#4b2d8c" stroke-width="3.4" stroke-linejoin="miter" stroke-miterlimit="3" /><line x1="1487.5" x2="1487.5" y1="836" y2="966" stroke="#4b2d8c" stroke-width="2" stroke-dasharray="2 3"/><line x1="1493.5" x2="1493.5" y1="751" y2="973" stroke="#8a8a8e" stroke-width="2"/><line x1="1490.6" x2="1490.6" y1="751" y2="973" stroke="#e8428f" stroke-width="2" stroke-dasharray="3.5 2"/></svg><div class="t" style="left:1502px;top:756px;font-size:18.7px;letter-spacing:-0.5px;color:#e8428f">Forecast (1h)</div><div class="a" style="left:1465px;top:975px;width:58px;height:27px;background:#222226;border:1.5px solid #6a6a6e;border-bottom:none;border-radius:3px 3px 0 0"></div><div class="t" style="left:1465px;width:58px;text-align:center;top:980px;font-size:18px;color:#e0e0e2">NOW</div><div class="pn pd" style="left:991px;top:1015px;width:956px;height:200px;"></div><div class="t" style="left:1005px;top:1025.5px;font-size:25px;letter-spacing:-0.12px;color:#d4d4d6">Forecast outbound bandwidth on top 5 ports</div><div class="a" style="left:993px;top:1054px;width:952px;height:1px;background:#3a393f"></div><div class="t" style="left:980px;width:60px;text-align:right;top:1089.8px;font-size:15.5px;letter-spacing:-0.6px;color:#d0d0d2">15</div><svg class="a" style="left:0;top:0" width="1999" height="1101" viewBox="0 0 1999 1101"><line x1="1044" x2="1937" y1="1097.5" y2="1097.5" stroke="#37363b" stroke-width="1"/><line x1="1493.5" x2="1493.5" y1="1062" y2="1101" stroke="#8a8a8e" stroke-width="2"/><line x1="1490.6" x2="1490.6" y1="1062" y2="1101" stroke="#e8428f" stroke-width="2" stroke-dasharray="3.5 2"/></svg><div class="t" style="left:1502px;top:1067px;font-size:18.7px;letter-spacing:-0.5px;color:#e8428f">Forecast (1h)</div><div class="pn" style="left:1959px;top:998px;width:60px;height:120px;background:#31281f"></div><div class="a" style="left:1997px;top:1036px;width:2px;height:15px;background:#f0f0f0"></div><div class="a" style="left:1997px;top:1065px;width:2px;height:13px;background:#f0f0f0"></div><div class="a" style="left:1996px;top:1068px;width:3px;height:2px;background:#f0f0f0"></div><div class="a" style="left:1997px;top:1095px;width:2px;height:4px;background:#f0f0f0"></div><div class="a" style="left:0;top:1099px;width:1999px;height:2px;background:#4d7a55"></div></body></html>
